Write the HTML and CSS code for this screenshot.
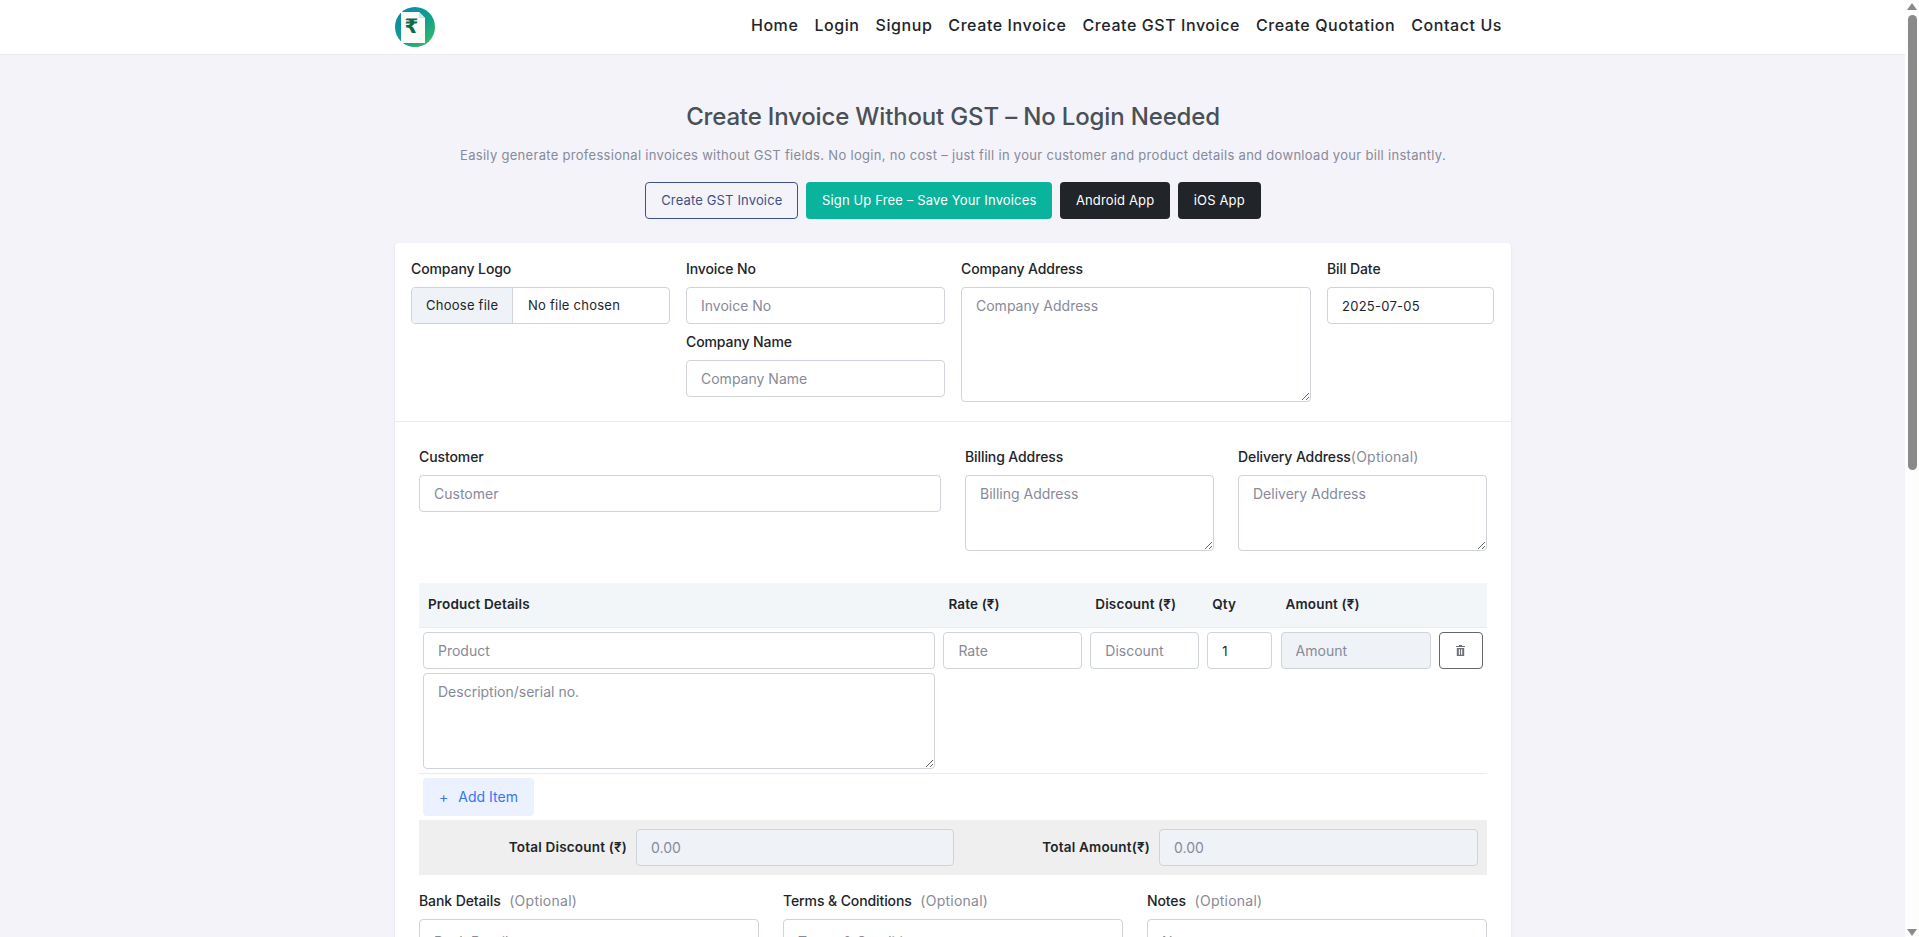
FILE: index.html
```html
<!DOCTYPE html>
<html lang="en">
<head>
<meta charset="utf-8">
<title>Create Invoice Without GST</title>
<link rel="stylesheet" href="styles.css">
</head>
<body>
<header class="topbar">
  <div class="topbar-inner">
    <a class="logo" href="#">
      <svg width="40" height="40" viewBox="0 0 40 40">
        <defs><linearGradient id="lg" x1="0" y1="0" x2="1" y2="1"><stop offset="0" stop-color="#0b83b0"/><stop offset=".55" stop-color="#12a08a"/><stop offset="1" stop-color="#3fbf63"/></linearGradient></defs>
        <circle cx="20" cy="20" r="20" fill="url(#lg)"/>
        <path d="M6 5H24L30 11V36H6Z" fill="#fbfbf7"/>
        <path d="M24 5L30 11H24Z" fill="#cfe9df"/>
        <text x="16.500" y="26" text-anchor="middle" font-family="DejaVu Sans" font-weight="700" font-size="20" fill="#0c6b4b">₹</text>
      </svg>
    </a>
    <nav class="nav">
      <a href="#">Home</a>
      <a href="#">Login</a>
      <a href="#">Signup</a>
      <a href="#">Create Invoice</a>
      <a href="#">Create GST Invoice</a>
      <a href="#">Create Quotation</a>
      <a href="#">Contact Us</a>
    </nav>
  </div>
</header>

<main class="container">
  <section class="hero">
    <h1>Create Invoice Without GST – No Login Needed</h1>
    <p>Easily generate professional invoices without GST fields. No login, no cost – just fill in your customer and product details and download your bill instantly.</p>
    <div class="hero-actions">
      <a class="btn btn-outline" href="#">Create GST Invoice</a>
      <a class="btn btn-teal" href="#">Sign Up Free – Save Your Invoices</a>
      <a class="btn btn-dark" href="#">Android App</a>
      <a class="btn btn-dark" href="#">iOS App</a>
    </div>
  </section>

  <form class="card">
    <div class="company">
      <div>
        <label class="label">Company Logo</label>
        <div class="control file"><span class="file-button">Choose file</span><span class="file-name">No file chosen</span></div>
      </div>
      <div>
        <label class="label">Invoice No</label>
        <input class="control" type="text" placeholder="Invoice No">
        <label class="label label-next">Company Name</label>
        <input class="control" type="text" placeholder="Company Name">
      </div>
      <div>
        <label class="label">Company Address</label>
        <textarea class="control area-address" placeholder="Company Address"></textarea>
      </div>
      <div>
        <label class="label">Bill Date</label>
        <input class="control value" type="text" value="2025-07-05">
      </div>
    </div>

    <div class="body">
      <div class="customer">
        <div>
          <label class="label">Customer</label>
          <input class="control" type="text" placeholder="Customer">
        </div>
        <div>
          <label class="label">Billing Address</label>
          <textarea class="control area-small" placeholder="Billing Address"></textarea>
        </div>
        <div>
          <label class="label">Delivery Address<span class="muted">(Optional)</span></label>
          <textarea class="control area-small" placeholder="Delivery Address"></textarea>
        </div>
      </div>

      <div class="items">
        <div class="items-head">
          <span>Product Details</span>
          <span>Rate (₹)</span>
          <span>Discount (₹)</span>
          <span>Qty</span>
          <span>Amount (₹)</span>
          <span></span>
        </div>
        <div class="items-row">
          <div class="product">
            <input class="control" type="text" placeholder="Product">
            <textarea class="control area-desc" placeholder="Description/serial no."></textarea>
          </div>
          <input class="control" type="text" placeholder="Rate">
          <input class="control" type="text" placeholder="Discount">
          <input class="control value" type="text" value="1">
          <input class="control disabled" type="text" placeholder="Amount" readonly>
          <button class="delete" type="button" aria-label="Delete">
            <svg width="9" height="11" viewBox="0 0 9 11"><path d="M3 0H6V1H9V2H0V1H3ZM.8 3H8.200V11H.8ZM2.800 4.200V9.800H3.900V4.200ZM5.100 4.200V9.800H6.200V4.200Z" fill="#6d7077" fill-rule="evenodd"/></svg>
          </button>
        </div>
        <button class="add" type="button"><span class="plus">+</span>Add Item</button>
      </div>

      <div class="totals">
        <label class="total-label">Total Discount (₹)</label>
        <input class="control disabled" type="text" placeholder="0.00" readonly>
        <label class="total-label">Total Amount(₹)</label>
        <input class="control disabled" type="text" placeholder="0.00" readonly>
      </div>

      <div class="extras">
        <div>
          <label class="label">Bank Details <span class="muted gap">(Optional)</span></label>
          <textarea class="control area-extra" placeholder="Bank Details"></textarea>
        </div>
        <div>
          <label class="label">Terms &amp; Conditions <span class="muted gap">(Optional)</span></label>
          <textarea class="control area-extra" placeholder="Terms &amp; Conditions"></textarea>
        </div>
        <div>
          <label class="label">Notes <span class="muted gap">(Optional)</span></label>
          <textarea class="control area-extra" placeholder="Notes"></textarea>
        </div>
      </div>
    </div>
  </form>
</main>

<div class="scrollbar" aria-hidden="true">
  <svg class="scroll-arrow" width="10" height="7" viewBox="0 0 10 7"><path d="M5 0L10 7H0Z" fill="#8a8a8a"/></svg>
  <div class="scroll-track"><div class="scroll-thumb"></div></div>
  <svg class="scroll-arrow" width="10" height="7" viewBox="0 0 10 7"><path d="M0 0H10L5 7Z" fill="#8a8a8a"/></svg>
</div>
</body>
</html>
```

FILE: styles.css
```css
* { box-sizing: border-box; }

body {
  margin: 0;
  padding-right: 13px;
  background: #f3f3f9;
  color: #212529;
  font-family: Inter, "Noto Sans", sans-serif;
  font-size: 14px;
  line-height: 21px;
  letter-spacing: .25px;
}

.scrollbar {
  position: fixed;
  top: 0;
  right: 0;
  bottom: 0;
  width: 14px;
  display: flex;
  flex-direction: column;
  align-items: center;
  padding: 3px 0 1px;
  background: #fdfdfd;
}
.scroll-arrow { display: block; flex: none; }
.scroll-track { flex: 1; width: 9px; padding-top: 5px; }
.scroll-thumb { height: 455px; background: #8a8a8a; border-radius: 5px; }

.topbar { height: 55px; background: #fff; border-bottom: 1px solid #e9ebec; }
.topbar-inner { width: 1140px; height: 54px; margin: 0 auto; padding: 0 21px 0 12px; display: flex; align-items: center; justify-content: space-between; }
.logo { display: block; width: 40px; height: 40px; }
.logo svg { display: block; }
.nav { display: flex; gap: 16px; padding-bottom: 4px; }
.nav a { color: #212529; font-size: 16px; font-weight: 450; text-decoration: none; line-height: 24px; letter-spacing: .57px; }

.container { width: 1140px; margin: 0 auto; padding: 0 12px; }

.hero { padding-top: 47px; text-align: center; }
.hero h1 { margin: 0; font-size: 24px; font-weight: 500; line-height: 29px; color: #495057; letter-spacing: -.16px; }
.hero p { margin: 14px 0 0; color: #878a99; font-size: 13px; letter-spacing: .3px; line-height: 21px; }
.hero-actions { display: flex; justify-content: center; gap: 8px; margin-top: 16px; }
.btn { display: block; height: 37px; padding: 7px 14.750px; border: 1px solid transparent; border-radius: 4px; font-size: 13px; letter-spacing: .15px; line-height: 21px; text-decoration: none; }
.btn-outline { color: #405189; border-color: #405189; }
.btn-teal { background: #0ab39c; color: #fff; }
.btn-dark { background: #212529; color: #fff; }

.card { margin-top: 24px; background: #fff; border-radius: 4px; box-shadow: 0 1px 2px rgba(56, 65, 74, .15); }

.label { display: block; height: 21px; margin-bottom: 8px; font-weight: 500; color: #212529; letter-spacing: -.1px; }
.label-next { margin-top: 7px; }
.muted { color: #878a99; font-weight: 400; letter-spacing: .25px; }
.gap { margin-left: 5px; }

.control {
  display: block;
  width: 100%;
  height: 37px;
  padding: 7px 14px;
  border: 1px solid #ced4da;
  border-radius: 4px;
  background: #fff;
  color: #212529;
  font: inherit;
  letter-spacing: 0;
  outline: none;
}
.control::placeholder { color: #878a99; opacity: 1; }
.value { font-size: 13px; letter-spacing: .25px; }
textarea.control { resize: vertical; }
.disabled { background: #eff2f7; }

.file { display: flex; padding: 0; overflow: hidden; font-size: 13px; letter-spacing: .25px; line-height: 35px; }
.file-button { width: 101px; padding-left: 14px; background: #eff2f7; border-right: 1px solid #ced4da; }
.file-name { padding-left: 15px; }

.area-address { height: 115px; }
.area-small { height: 76px; }
.area-desc { height: 96px; margin-top: 4px; }
.area-extra { height: 100px; padding-top: 11px; }

.company {
  display: grid;
  grid-template-columns: 259px 259px 350px 1fr;
  gap: 16px;
  padding: 15px 17px 19px 16px;
  border-bottom: 1px solid #e9ebec;
}

.body { padding: 24px; }
.customer { display: grid; grid-template-columns: 522px 249px 249px; gap: 24px; }

.items { margin-top: 32px; }
.items-head, .items-row {
  display: grid;
  grid-template-columns: 512px 138.500px 108.500px 65px 150px 44px;
  column-gap: 8.400px;
  padding: 0 4px;
}
.items-head { height: 45px; align-items: center; padding-bottom: 2px; background: #f3f6f9; border-bottom: 1px solid #e9ebec; font-weight: 600; font-size: 13.500px; letter-spacing: .15px; }
.items-head span { padding-left: 5px; }
.items-row { padding-top: 4px; padding-bottom: 4px; align-items: start; border-bottom: 1px solid #e9ebec; }
.delete { display: flex; align-items: center; justify-content: center; height: 37px; padding: 0; border: 1px solid #666; border-radius: 4px; background: #fff; }
.add { display: block; width: 111px; height: 38px; margin: 4px 0 4px 4px; padding: 0 0 2px; border: 0; border-radius: 4px; background: #ebf1fe; color: #3577f1; font: inherit; letter-spacing: 0; }
.plus { margin-right: 10px; }

.totals {
  display: grid;
  grid-template-columns: 208px 318px 187px 319px;
  gap: 9px;
  align-items: center;
  height: 55px;
  background: #efefef;
}
.total-label { text-align: right; font-weight: 600; font-size: 13.500px; letter-spacing: .2px; }

.extras { display: grid; grid-template-columns: repeat(3, 340px); gap: 24px; margin-top: 15px; }
```
